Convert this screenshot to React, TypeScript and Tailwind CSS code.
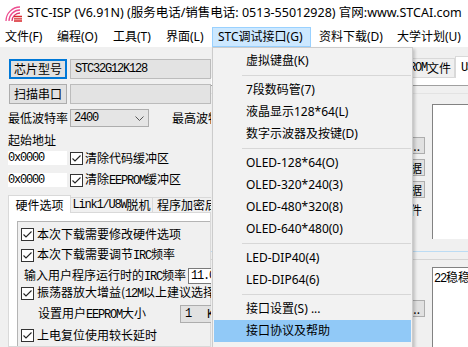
import React from "react";

const ui = "font-['Noto_Sans','Noto_Sans_CJK_SC',sans-serif]";
const cjk = "font-['Noto_Sans_CJK_SC',sans-serif]";

// SimSun-ish latin runs: 6px advance
function M({ children }: { children: React.ReactNode }) {
  return <span className="font-['Liberation_Mono',monospace] tracking-[-1.2px]">{children}</span>;
}

function Check() {
  return (
    <span className="flex h-[13px] w-[13px] shrink-0 items-center justify-center border border-[#333] bg-white">
      <svg width="11" height="11" viewBox="0 0 11 11">
        <path d="M1.5 5.5l2.5 2.5L9.5 2.5" fill="none" stroke="#222" strokeWidth="1.1" />
      </svg>
    </span>
  );
}

function Logo() {
  return (
    <svg width="17" height="16" viewBox="0 0 17 16" className="ml-[5px] shrink-0">
      <g fill="none" strokeWidth="1.3">
        <path d="M1 15A14 14 0 0 1 15 1" stroke="#ec4d8f" />
        <path d="M4 15A11 11 0 0 1 15 4" stroke="#ec4d8f" />
        <path d="M7 15A8 8 0 0 1 15 7" stroke="#e0356f" />
        <path d="M9 10.5h8M9 12.8h8M9 15h8" stroke="#d8262b" />
      </g>
    </svg>
  );
}

const MENUS: [string, string][] = [
  ["文件(F)", "w-[50px] pl-[5px]"],
  ["编程(O)", "w-[55px] pl-[7px]"],
  ["工具(T)", "w-[54px] pl-[8px]"],
  ["界面(L)", "w-[53px] pl-[7px]"],
  ["STC调试接口(G)", "w-[99px] pl-[5px] border border-[#99d1ff] bg-[#cce8ff]"],
  ["资料下载(D)", "w-[79px] pl-[8px]"],
  ["大学计划(U)", "w-[78px] pl-[7px]"],
];

type Item = { t: string; sep?: boolean; active?: boolean };

const DROP: Item[] = [
  { t: "虚拟键盘(K)" },
  { t: "", sep: true },
  { t: "7段数码管(7)" },
  { t: "液晶显示128*64(L)" },
  { t: "数字示波器及按键(D)" },
  { t: "", sep: true },
  { t: "OLED-128*64(O)" },
  { t: "OLED-320*240(3)" },
  { t: "OLED-480*320(8)" },
  { t: "OLED-640*480(0)" },
  { t: "", sep: true },
  { t: "LED-DIP40(4)" },
  { t: "LED-DIP64(6)" },
  { t: "", sep: true },
  { t: "接口设置(S) ..." },
  { t: "接口协议及帮助", active: true },
];

function SmallBtn({ label, className = "" }: { label: string; className?: string }) {
  return (
    <div
      className={`flex h-[17px] items-center justify-end overflow-hidden whitespace-nowrap border border-[#adadad] bg-[#e1e1e1] ${className}`}
    >
      {label}
    </div>
  );
}

export default function App() {
  return (
    <div className="relative flex h-[347px] w-[468px] flex-col overflow-hidden bg-[#f0f0f0] text-black">
      {/* title bar */}
      <div className={`flex h-[27px] items-center whitespace-nowrap bg-white text-[12.5px] ${ui}`}>
        <Logo />
        <span className="ml-[5px]">STC-ISP (V6.91N) (服务电话/销售电话: 0513-55012928) 官网:www.STCAI.com</span>
      </div>

      {/* menu bar */}
      <div className={`flex h-[20px] items-stretch whitespace-nowrap bg-white text-[12px] ${ui}`}>
        {MENUS.map(([t, c]) => (
          <div key={t} className={`flex shrink-0 items-center ${c}`}>
            {t}
          </div>
        ))}
      </div>

      {/* body */}
      <div className="flex flex-1 overflow-hidden">
        {/* left panel */}
        <div className={`flex w-[211px] shrink-0 flex-col overflow-hidden pl-[8px] pt-[12px] text-[12px] leading-none whitespace-nowrap ${cjk}`}>
          <div className="flex h-[20px]">
            <div className="ml-[1px] flex w-[58px] shrink-0 items-center justify-center border-2 border-[#0078d7] bg-[#e1e1e1]">
              芯片型号
            </div>
            <div className="ml-[3px] flex flex-1 items-center border border-[#bcbcbc] bg-[#e3e3e3] pl-[4px]">
              <M>STC32G12K128</M>
            </div>
          </div>
          <div className="mt-[5px] flex h-[20px]">
            <div className="ml-[1px] flex w-[58px] shrink-0 items-center justify-center border border-[#adadad] bg-[#e1e1e1]">
              扫描串口
            </div>
            <div className="ml-[3px] flex-1 border border-[#bcbcbc] bg-[#e3e3e3]" />
          </div>
          <div className="mt-[5px] flex h-[18px] items-center">
            <span className="w-[62px] shrink-0">最低波特率</span>
            <div className="flex h-[18px] w-[79px] shrink-0 items-center justify-between border border-[#adadad] bg-[#e5e5e5] pl-[3px] pr-[4px]">
              <M>2400</M>
              <svg width="9" height="5" viewBox="0 0 9 5">
                <path d="M0.5 0.5L4.5 4.5L8.5 0.5" fill="none" stroke="#555" />
              </svg>
            </div>
            <span className="ml-[23px]">最高波特率</span>
          </div>
          <div className="mt-[6px] flex h-[14px] items-center">起始地址</div>
          <div className="mt-[4px] flex h-[14px] items-center">
            <div className="flex h-[14px] w-[59px] shrink-0 items-center bg-white">
              <M>0x0000</M>
            </div>
            <span className="ml-[3px]">
              <Check />
            </span>
            <span className="ml-[2px]">清除代码缓冲区</span>
          </div>
          <div className="mt-[8px] flex h-[14px] items-center">
            <div className="flex h-[14px] w-[59px] shrink-0 items-center bg-white">
              <M>0x0000</M>
            </div>
            <span className="ml-[3px]">
              <Check />
            </span>
            <span className="ml-[2px]">
              清除<M>EEPROM</M>缓冲区
            </span>
          </div>

          {/* tabs */}
          <div className="mt-[8px] flex h-[18px] items-end">
            <div className="flex h-[18px] w-[63px] shrink-0 items-center justify-center border border-b-0 border-[#d9d9d9] bg-white">
              硬件选项
            </div>
            <div className="flex h-[16px] w-[82px] shrink-0 items-center justify-center border border-l-0 border-[#d9d9d9] bg-[#f0f0f0]">
              <M>Link1/U8W</M>脱机
            </div>
            <div className="flex h-[16px] w-[70px] shrink-0 items-center border border-l-0 border-[#d9d9d9] bg-[#f0f0f0] pl-[4px]">
              程序加密后传输
            </div>
          </div>
          <div className="flex flex-1 flex-col border border-t-0 border-[#d9d9d9] bg-white pl-[8px] pt-[8px]">
            <div className="flex flex-1 flex-col border-l border-t border-[#b4b4b4] bg-[#f0f0f0] pl-[3px]">
              <div className="mt-[4px] flex h-[16px] items-center">
                <Check />
                <span className="ml-[3px]">本次下载需要修改硬件选项</span>
              </div>
              <div className="mt-[5px] flex h-[16px] items-center">
                <Check />
                <span className="ml-[3px]">
                  本次下载需要调节<M>IRC</M>频率
                </span>
              </div>
              <div className="mt-[5px] flex h-[16px] items-center pl-[3px]">
                <span className="w-[164px] shrink-0">
                  输入用户程序运行时的<M>IRC</M>频率
                </span>
                <div className="flex h-[16px] flex-1 items-center border border-[#7a7a7a] bg-white pl-[2px]">
                  <M>11.0592</M>
                </div>
              </div>
              <div className="mt-[1px] flex h-[16px] items-center">
                <Check />
                <span className="ml-[3px]">
                  振荡器放大增益(<M>12M</M>以上建议选择)
                </span>
              </div>
              <div className="mt-[4px] flex h-[18px] items-center pl-[17px]">
                <span className="w-[142px] shrink-0">
                  设置用户<M>EEPROM</M>大小
                </span>
                <div className="flex h-[18px] flex-1 items-center border border-[#adadad] bg-[#e1e1e1] pl-[4px]">
                  <M>1</M>
                  <span className="ml-[16px]">
                    <M>K</M>
                  </span>
                </div>
              </div>
              <div className="mt-[4px] flex h-[16px] items-center">
                <Check />
                <span className="ml-[3px]">上电复位使用较长延时</span>
              </div>
            </div>
          </div>
        </div>

        {/* right panel (mostly behind the menu) */}
        <div className={`flex flex-1 flex-col overflow-hidden pt-[9px] text-[12px] leading-none whitespace-nowrap ${cjk}`}>
          <div className="ml-[114px] flex h-[22px] items-end">
            <div className="flex h-[20px] w-[60px] shrink-0 items-center justify-center border border-[#d9d9d9] bg-[#f0f0f0]">
              程序文件
            </div>
            <div className="flex h-[20px] w-[70px] shrink-0 items-center justify-end border border-l-0 border-[#d9d9d9] bg-[#f0f0f0] pr-[3px]">
              <M>EEPROM</M>文件
            </div>
            <div className="flex h-[22px] w-[130px] shrink-0 items-center border border-b-0 border-[#d9d9d9] bg-white pl-[5px]">
              <M>USB-CDC/</M>串口助手
            </div>
          </div>
          <div className="h-[8px] border-b border-[#a0a0a0] bg-white" />
          <div className="h-[8px] border-b border-[#e3e3e3]" />
          <div className="mt-[10px] ml-[150px] flex h-[135px]">
            <div className="flex w-[64px] shrink-0 flex-col pt-[33px]">
              <SmallBtn label="设置..." className="pr-[4px]" />
              <SmallBtn label="复制接收数据" className="mt-[5px] pr-[2px]" />
              <SmallBtn label="保存接收数据" className="mt-[5px] pr-[2px]" />
              <div className="mt-[6px] pr-[3px] text-right">接收文件</div>
            </div>
            <div className="ml-[7px] flex-1 border-l border-t border-[#828282] bg-white" />
          </div>
          <div className="mt-[12px] h-px bg-[#bcdcf4]" />
          <div className="mt-[7px] h-px bg-[#d5d5d5]" />
          <div className="mt-[7px] ml-[150px] flex flex-1">
            <div className="flex w-[64px] shrink-0 flex-col pt-[33px]">
              <SmallBtn label="发送..." className="pr-[4px]" />
            </div>
            <div className="ml-[7px] flex-1 border-l border-t border-[#828282] bg-white pl-[1px] pt-[3px]">
              <M>22</M>稳稳定
            </div>
          </div>
        </div>
      </div>

      {/* open drop-down menu */}
      <div
        className={`absolute left-[212px] top-[47px] flex h-[302px] w-[201px] flex-col border border-[#cccccc] bg-[#f2f2f2] pt-[2px] text-[12px] leading-none shadow-[2px_2px_3px_rgba(0,0,0,0.2)] ${ui}`}
      >
        {DROP.map((it, i) =>
          it.sep ? (
            <div key={i} className="flex h-[7px] items-center pl-[29px] pr-[1px]">
              <div className="h-px flex-1 bg-[#d7d7d7]" />
            </div>
          ) : (
            <div
              key={i}
              className={`mx-[1px] flex h-[22px] items-center pl-[32px] ${it.active ? "bg-[#91c9f7]" : ""}`}
            >
              {it.t}
            </div>
          )
        )}
      </div>
    </div>
  );
}
